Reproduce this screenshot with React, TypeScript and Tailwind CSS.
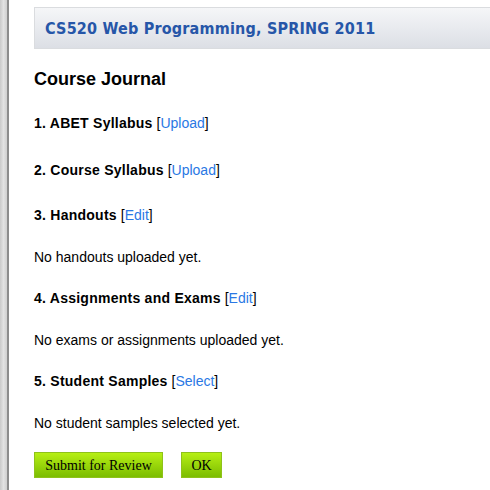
import React from 'react';

const items = [
  { title: '1. ABET Syllabus', action: 'Upload', note: null, gap: 'mt-[26px]' },
  { title: '2. Course Syllabus', action: 'Upload', note: null, gap: 'mt-[31px]' },
  { title: '3. Handouts', action: 'Edit', note: 'No handouts uploaded yet.', gap: 'mt-[29px]' },
  { title: '4. Assignments and Exams', action: 'Edit', note: 'No exams or assignments uploaded yet.', gap: 'mt-[25px]' },
  { title: '5. Student Samples', action: 'Select', note: 'No student samples selected yet.', gap: 'mt-[25px]' },
];

export default function App() {
  return (
    <div className="flex min-h-[490px] w-[490px] bg-white font-['Liberation_Sans',Arial,sans-serif] text-[14px] text-black">
      {/* left frame strip */}
      <div className="w-[7px] shrink-0 bg-gradient-to-r from-[#c9c9c9] via-[#e2e2e2] to-[#cfcfcf]" />
      <div className="w-[2px] shrink-0 bg-[#8c8c8c]" />

      <div className="flex-1 pl-[25px]">
        <div className="mt-[7px] flex h-[42px] items-center border border-[#dadcdf] border-r-0 bg-gradient-to-b from-[#f5f6f8] to-[#dcdfe5] pl-[10px]">
          <h1 className="mt-[1px] font-['DejaVu_Sans_Condensed','DejaVu_Sans',Verdana,sans-serif] text-[16px] font-bold tracking-[0.2px] text-[#2656a8]">
            CS520 Web Programming, SPRING 2011
          </h1>
        </div>

        <h2 className="mt-[20px] text-[18px] font-bold leading-[20px]">Course Journal</h2>

        {items.map((it) => (
          <div key={it.title}>
            <div className={`${it.gap} leading-[16px]`}>
              <span className="font-bold tracking-[0.25px]">{it.title}</span>{' '}
              <span>
                [<a className="text-[#2a78e4]">{it.action}</a>]
              </span>
            </div>
            {it.note && <p className="mt-[26px] leading-[16px]">{it.note}</p>}
          </div>
        ))}

        <div className="mt-[21px] flex gap-[18px] font-['Liberation_Serif','Times_New_Roman',serif] text-[14px]">
          <button className="h-[26px] w-[129px] border border-[#8fc21a] bg-gradient-to-b from-[#b6ef14] to-[#7cbd02] text-black">
            Submit for Review
          </button>
          <button className="h-[26px] w-[41px] border border-[#8fc21a] bg-gradient-to-b from-[#b6ef14] to-[#7cbd02] text-black">
            OK
          </button>
        </div>
      </div>
    </div>
  );
}
